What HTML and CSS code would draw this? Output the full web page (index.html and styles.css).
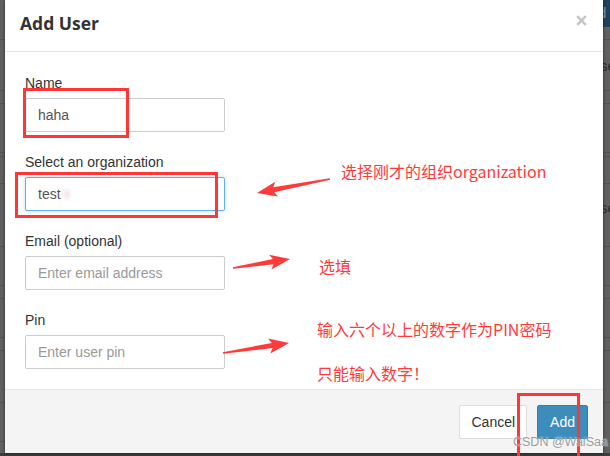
FILE: index.html
```html
<!DOCTYPE html>
<html lang="en">
<head>
<meta charset="utf-8">
<title>Add User</title>
<link rel="stylesheet" href="styles.css">
</head>
<body>
<div class="screen">
  <div class="bg bg-left">
    <div class="row"></div><div class="row"></div><div class="row"></div><div class="row"></div>
    <div class="row"></div><div class="row"></div><div class="row"></div><div class="row"></div>
    <div class="row"></div><div class="row"></div><div class="row"></div><div class="row"></div>
    <div class="row"></div>
  </div>

  <div class="modal">
    <div class="modal-header">
      <h4 class="modal-title">Add User</h4>
      <button class="close" type="button" aria-label="Close">
        <svg width="11" height="11" viewBox="0 0 11 11"><path d="M1.2 1.2 L9.8 9.8 M9.8 1.2 L1.2 9.8" stroke="#c6c6c6" stroke-width="2.6" stroke-linecap="butt"/></svg>
      </button>
    </div>
    <div class="modal-body">
      <div class="form-group">
        <label class="label">Name</label>
        <div class="input">haha</div>
      </div>
      <div class="form-group">
        <label class="label">Select an organization</label>
        <div class="input focus">test<span class="smudge"></span></div>
      </div>
      <div class="form-group">
        <label class="label">Email (optional)</label>
        <div class="input placeholder">Enter email address</div>
      </div>
      <div class="form-group">
        <label class="label">Pin</label>
        <div class="input placeholder">Enter user pin</div>
      </div>
    </div>
    <div class="modal-footer">
      <button class="btn btn-default" type="button">Cancel</button>
      <button class="btn btn-primary" type="button">Add</button>
    </div>
  </div>

  <div class="bg bg-right">
    <div class="row"><span class="frag light">d</span></div><div class="row"><span class="frag">se</span></div><div class="row"></div><div class="row"></div>
    <div class="row"></div><div class="row"></div><div class="row"><span class="frag">se</span></div><div class="row"></div>
    <div class="row"></div><div class="row"></div><div class="row"></div><div class="row"></div>
    <div class="row"></div>
  </div>
  <div class="bg-bottom"></div>
</div>

<div class="annotations">
  <svg class="marks" width="610" height="456" viewBox="0 0 610 456">
    <g fill="none" stroke="#ff3636" stroke-width="3">
      <rect x="24.5" y="89.5" width="103" height="47"/>
      <rect x="16.5" y="173.5" width="200" height="43"/>
      <rect x="518.5" y="394.5" width="60" height="70"/>
    </g>
    <g fill="#ff3a3a">
      <g transform="translate(257 193) rotate(-10.86)">
        <polygon points="0,0 20,-7.5 17,-2.6 74.3,-0.7 74.3,0.7 17,2.6 20,7.5"/>
      </g>
      <g transform="translate(290 259) rotate(171)">
        <polygon points="0,0 20,-7.5 17,-2.6 57.7,-0.7 57.7,0.7 17,2.6 20,7.5"/>
      </g>
      <g transform="translate(289 343) rotate(171.4)">
        <polygon points="0,0 20,-7.5 17,-2.6 66.8,-0.7 66.8,0.7 17,2.6 20,7.5"/>
      </g>
    </g>
  </svg>
  <div class="note note-org">选择刚才的组织organization</div>
  <div class="note note-email">选填</div>
  <div class="note note-pin">输入六个以上的数字作为PIN密码</div>
  <div class="note note-digits">只能输入数字！</div>
  <div class="watermark">CSDN @WaiSaa</div>
</div>
</body>
</html>
```

FILE: styles.css
```css
* { box-sizing: border-box; }

html, body {
  margin: 0;
  padding: 0;
}

body {
  width: 610px;
  height: 456px;
  overflow: hidden;
  position: relative;
  background: #5c5c5c;
  font-family: "Liberation Sans", Arial, sans-serif;
  font-size: 14px;
  color: #333;
}

.screen {
  display: grid;
  grid-template-columns: 5px 598px 7px;
  grid-template-rows: 453px 3px;
}

/* dimmed page behind the modal */
.bg {
  display: flex;
  flex-direction: column;
  background: #606060;
  overflow: hidden;
}
.bg .row {
  flex: none;
  border-bottom: 1px solid #525252;
  white-space: nowrap;
  overflow: hidden;
}
.bg .row:nth-child(1)  { height: 40px; }
.bg .row:nth-child(2)  { height: 51px; }
.bg .row:nth-child(3)  { height: 13px; }
.bg .row:nth-child(4)  { height: 49px; }
.bg .row:nth-child(5)  { height: 4px; }
.bg .row:nth-child(6)  { height: 27px; }
.bg .row:nth-child(7)  { height: 63px; }
.bg .row:nth-child(8)  { height: 39px; }
.bg .row:nth-child(9)  { height: 13px; }
.bg .row:nth-child(10) { height: 39px; }
.bg .row:nth-child(11) { height: 13px; }
.bg .row:nth-child(12) { height: 52px; }
.bg .row:nth-child(13) { height: 39px; }

.bg-right .row:nth-child(1) {
  background: linear-gradient(#22415f 0, #22415f 27px, #6a6a6a 27px, #6a6a6a 28px, #606060 28px);
}
.bg-right .row:nth-child(2) { padding-top: 17px; }
.bg-right .row:nth-child(7) { padding-top: 15px; }
.frag {
  display: block;
  margin-left: -3px;
  font-size: 15px;
  line-height: 18px;
  color: #2e2e2e;
}
.frag.light {
  color: #8a98a8;
  margin-top: 4px;
  margin-left: -5px;
}

.bg-bottom {
  grid-column: 1 / 4;
  background: #3c3c3c;
}

/* modal */
.modal {
  position: relative;
  z-index: 1;
  display: flex;
  flex-direction: column;
  background: #fff;
  box-shadow: 0 0 3px rgba(0, 0, 0, 0.6);
}

.modal-header {
  height: 53px;
  display: flex;
  justify-content: space-between;
  align-items: flex-start;
  padding: 11px 16px 0 15px;
  border-bottom: 1px solid #e5e5e5;
}

.modal-title {
  margin: 0;
  font-family: "Open Sans", "Liberation Sans", sans-serif;
  font-weight: 700;
  font-size: 17.5px;
  line-height: 24px;
  color: #333;
}

.close {
  margin: 4px 0 0;
  padding: 0;
  border: 0;
  background: none;
  width: 11px;
  height: 11px;
  line-height: 0;
}

.modal-body {
  flex: 1;
  padding: 21px 20px 0;
}

.form-group {
  margin-bottom: 20px;
  display: flex;
  flex-direction: column;
  align-items: flex-start;
}

.label {
  display: block;
  font-size: 14px;
  line-height: 20px;
  margin-bottom: 5px;
  color: #333;
}

.input {
  width: 200px;
  height: 34px;
  padding: 6px 12px;
  font-size: 14px;
  line-height: 20px;
  color: #555;
  border: 1px solid #ccc;
  border-radius: 2px;
  background: #fff;
  white-space: nowrap;
}
.input.focus {
  border-color: #66afe9;
  box-shadow: 0 0 4px rgba(102, 175, 233, 0.45);
}
.input.placeholder {
  color: #999;
}
.smudge {
  display: inline-block;
  width: 10px;
  height: 15px;
  margin-left: 1px;
  vertical-align: -3px;
  border-radius: 5px;
  background: radial-gradient(ellipse at center, rgba(240, 200, 210, 0.55) 0, rgba(255, 255, 255, 0) 75%);
}

.modal-footer {
  display: flex;
  justify-content: flex-end;
  gap: 10px;
  padding: 15px 15px 14px;
  border-top: 1px solid #e5e5e5;
  background: #f4f4f4;
}

.btn {
  height: 34px;
  font-family: "Liberation Sans", Arial, sans-serif;
  font-size: 14px;
  line-height: 20px;
  border-radius: 2px;
  border: 1px solid transparent;
  cursor: pointer;
}
.btn-default {
  padding: 0 11px;
  background: #fff;
  border-color: #ddd;
  color: #333;
}
.btn-primary {
  padding: 0 12px;
  background: #3c8dbc;
  border-color: #367fa9;
  color: #fff;
}

/* screenshot annotations lying over the dialog */
.annotations {
  position: absolute;
  left: 0;
  top: 0;
  width: 610px;
  height: 456px;
  z-index: 5;
  pointer-events: none;
}
.marks {
  position: absolute;
  left: 0;
  top: 0;
}
.note {
  position: absolute;
  font-family: "Noto Sans CJK SC", "Liberation Sans", sans-serif;
  font-size: 16px;
  line-height: 20px;
  color: #ff3a3a;
  white-space: nowrap;
}
.note-org { left: 341px; top: 161px; }
.note-email { left: 319px; top: 256px; }
.note-pin { left: 317px; top: 319px; }
.note-digits { left: 317px; top: 363px; }

.watermark {
  position: absolute;
  left: 513px;
  top: 434px;
  font-family: "Liberation Sans", Arial, sans-serif;
  font-size: 12.5px;
  line-height: 16px;
  color: #9c9c9c;
  text-shadow: 0 0 2px rgba(255, 255, 255, 0.8);
  white-space: nowrap;
}
```
